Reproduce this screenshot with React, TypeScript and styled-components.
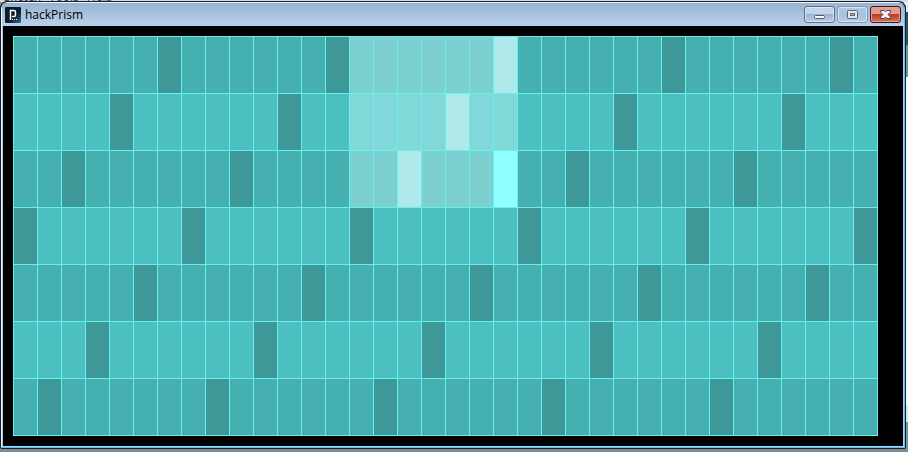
import React from "react";
import styled, { createGlobalStyle } from "styled-components";

const GlobalStyle = createGlobalStyle`
  * { box-sizing: border-box; }
  html, body, #root { height: 100%; }
  body { margin: 0; overflow: hidden; background: #7f8b93; font-family: "Open Sans", "Noto Sans", sans-serif; }
`;

const Desktop = styled.div`
  height: 100vh;
  display: flex;
  flex-direction: column;
  background:
    linear-gradient(#d5dae6, #d5dae6) 0 0 / 100% 2px no-repeat,
    linear-gradient(to bottom, #e8ebf3 0 12px, #3e4a55 12px 45px, #7d8a93 45px 77px, #fdfdfd 77px 405px, #dfe3e6 405px 422px, #7f8b93 422px) 100% 0 / 4px 100% no-repeat,
    #7f8b93;
`;

const BackgroundMenu = styled.nav`
  height: 1px;
  flex: none;
  overflow: hidden;
  display: flex;
  align-items: flex-end;
  gap: 8px;
  padding-left: 4px;
  font-size: 12px;
  line-height: 8px;
  color: #444;
`;

const Window = styled.main`
  flex: 1;
  margin: 0 2px 3px 0;
  display: flex;
  flex-direction: column;
  border: 1px solid #16202a;
  border-radius: 7px 7px 2px 2px;
  overflow: hidden;
  background: #000;
`;

const Frame = styled.div`
  flex: 1;
  display: flex;
  flex-direction: column;
  border: 1px solid;
  border-color: #eef5fc #3fcdf0 #3fcdf0 #f4f8ff;
  border-radius: 6px 6px 0 0;
  overflow: hidden;
`;

const TitleBar = styled.header`
  height: 23px;
  flex: none;
  display: flex;
  align-items: center;
  padding: 0 3px;
  gap: 4px;
  background: linear-gradient(#99b4d1, #b9d1ea);
`;

const Title = styled.h1`
  margin: 0;
  flex: 1;
  font-size: 12px;
  line-height: 16px;
  font-weight: 400;
  color: #000;
`;

const Controls = styled.div`
  display: flex;
  gap: 2px;
`;

const ControlButton = styled.button<{ $tone: "normal" | "faded" | "close" }>`
  width: 31px;
  height: 17px;
  padding: 0;
  display: grid;
  place-items: center;
  border-radius: 3px;
  border: 1px solid ${p => ({ normal: "#5b6f8a", faded: "#8298b4", close: "#431422" })[p.$tone]};
  box-shadow: inset 0 0 0 1px ${p => (p.$tone === "close" ? "#e3a093" : "#d5e3f3")};
  background: ${p =>
    p.$tone === "close"
      ? "linear-gradient(#e09c8d 0 45%, #bd3c25 50%, #d2735a)"
      : p.$tone === "faded"
        ? "linear-gradient(#b5cae2, #a9c0dc 50%, #b8cfe9)"
        : "linear-gradient(#c3d4e8 0 45%, #9db4d0 50%, #b9cfe8)"};

  svg { display: block; }
`;

const Client = styled.section`
  flex: 1;
  padding: 10px 25px 10px 10px;
  display: flex;
  border: solid;
  border-width: 0 1px 1px 1px;
  border-color: #a9c4ea #b9cbee #b9cbee #a9c4ea;
  background: #000;
`;

const Board = styled.div`
  flex: 1;
  display: grid;
  grid-template-columns: repeat(36, 1fr);
  grid-template-rows: repeat(7, 1fr);
  gap: 1px;
  padding: 1px;
  background: #68f0f0;
`;

const Cell = styled.div<{ $color: string }>`
  background: ${p => p.$color};
`;

const COLUMNS = 36;
const ROWS = 7;
const PERIOD = 7;
const CURSOR = { row: 2, column: 20 };

function cellColor(row: number, column: number) {
  if (row === CURSOR.row && column === CURSOR.column) return "#8fffff";
  const marked = (column + 2 * row) % PERIOD === 6;
  const selected = row < 3 && column >= 14 && column <= 20;
  if (selected) return marked ? "#afe9e9" : row % 2 ? "#80d8d8" : "#7cd0d0";
  if (marked) return "#3e9898";
  return row % 2 ? "#4cc0c0" : "#46b0b0";
}

const AppIcon = () => (
  <svg width="16" height="16" viewBox="0 0 16 16" aria-hidden="true">
    <defs>
      <linearGradient id="app" x1="0" y1="0" x2="1" y2="1">
        <stop offset="0" stopColor="#0b1c30" />
        <stop offset="0.6" stopColor="#0b1c2c" />
        <stop offset="1" stopColor="#3572a0" />
      </linearGradient>
    </defs>
    <rect width="16" height="16" rx="1" fill="url(#app)" />
    <path d="M5.5 13V3.5H9q1.5 0 1.5 1.5v3q0 1.5-1.5 1.5H7" fill="none" stroke="#fff" strokeWidth="1.5" />
    <path d="M7 12h1v1H7zM9 12h1v1H9zM11 12h1v1h-1z" fill="#fff" />
  </svg>
);

const MinimizeIcon = () => (
  <svg width="13" height="11" viewBox="0 0 13 11" aria-hidden="true">
    <rect x="1.5" y="6.5" width="10" height="3" rx="1" fill="#f7f7f7" stroke="#535666" />
  </svg>
);

const MaximizeIcon = () => (
  <svg width="13" height="11" viewBox="0 0 13 11" aria-hidden="true">
    <rect x="1.5" y="1.5" width="10" height="8" rx="1" fill="#e4e6e9" stroke="#5c6471" />
    <rect x="4.5" y="4.5" width="4" height="2" fill="#a9c0dc" stroke="#5c6471" />
  </svg>
);

const CloseIcon = () => (
  <svg width="13" height="11" viewBox="0 0 13 11" aria-hidden="true">
    <path
      d="M1.5 1.5h3.5l1.5 1.5 1.5-1.5h3.5v1.5l-2.5 2.5 2.5 2.5v1.5h-3.5l-1.5-1.5-1.5 1.5h-3.5v-1.5l2.5-2.5-2.5-2.5z"
      fill="#f8f8f8"
      stroke="#5c3d49"
      strokeLinejoin="round"
    />
  </svg>
);

export default function App() {
  return (
    <Desktop>
      <GlobalStyle />
      <BackgroundMenu>
        <span>Sketch</span>
        <span>Tools</span>
        <span>Help</span>
      </BackgroundMenu>
      <Window>
        <Frame>
          <TitleBar>
            <AppIcon />
            <Title>hackPrism</Title>
            <Controls>
              <ControlButton $tone="normal" aria-label="Minimize"><MinimizeIcon /></ControlButton>
              <ControlButton $tone="faded" aria-label="Maximize"><MaximizeIcon /></ControlButton>
              <ControlButton $tone="close" aria-label="Close"><CloseIcon /></ControlButton>
            </Controls>
          </TitleBar>
          <Client>
            <Board>
              {Array.from({ length: ROWS * COLUMNS }, (_, i) => (
                <Cell key={i} $color={cellColor(Math.floor(i / COLUMNS), i % COLUMNS)} />
              ))}
            </Board>
          </Client>
        </Frame>
      </Window>
    </Desktop>
  );
}
